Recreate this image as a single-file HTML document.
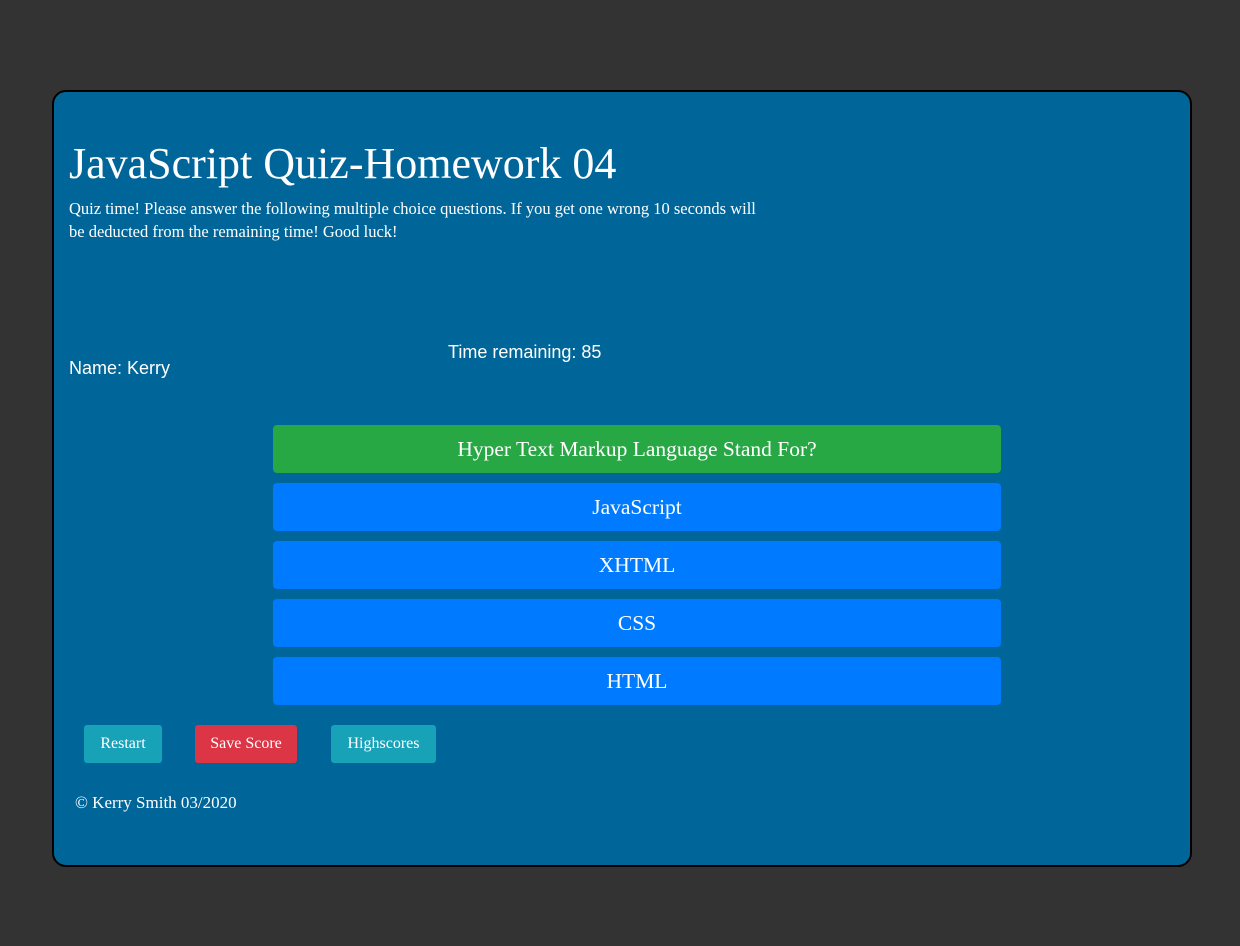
<!DOCTYPE html>
<html><head><meta charset="utf-8"><style>
*{box-sizing:border-box;margin:0;padding:0}
body{width:1240px;height:946px;background:#333;position:relative;overflow:hidden;font-family:"Liberation Serif",Georgia,serif;color:#fff}
.card{position:absolute;left:52px;top:90px;width:1140px;height:777px;background:#006699;border:2px solid #000;border-radius:14px}
.abs{position:absolute;white-space:nowrap}
h1{position:absolute;left:69px;top:139px;font-size:44px;font-weight:normal;line-height:50px}
p.intro{position:absolute;left:69px;top:197px;width:695px;font-size:16.5px;line-height:23px}
.sans{font-family:"Liberation Sans",Arial,sans-serif;font-size:18px}
.q{position:absolute;left:273px;width:728px;height:48px;border-radius:4px;background:#007bff;text-align:center;line-height:48px;font-size:21.5px}
.btn{position:absolute;top:725px;height:38px;border-radius:3px;text-align:center;line-height:38px;font-size:16px}
</style></head><body>
<div class="card"></div>
<h1>JavaScript Quiz-Homework 04</h1>
<p class="intro">Quiz time! Please answer the following multiple choice questions. If you get one wrong 10 seconds will be deducted from the remaining time! Good luck!</p>
<div class="abs sans" style="left:448px;top:342px">Time remaining: 85</div>
<div class="abs sans" style="left:69px;top:358px">Name: Kerry</div>
<div class="q" style="top:425px;background:#28a745">Hyper Text Markup Language Stand For?</div>
<div class="q" style="top:483px">JavaScript</div>
<div class="q" style="top:541px">XHTML</div>
<div class="q" style="top:599px">CSS</div>
<div class="q" style="top:657px">HTML</div>
<div class="btn" style="left:84px;width:78px;background:#17a2b8">Restart</div>
<div class="btn" style="left:195px;width:102px;background:#dc3545">Save Score</div>
<div class="btn" style="left:331px;width:105px;background:#17a2b8">Highscores</div>
<div class="abs" style="left:75px;top:793px;font-size:17px">© Kerry Smith 03/2020</div>
</body></html>
